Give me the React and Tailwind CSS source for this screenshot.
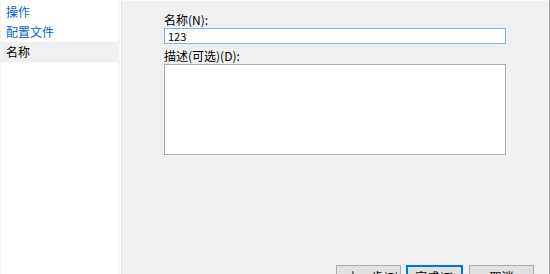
import React from "react";

const font = { fontFamily: '"Noto Sans CJK SC", "Microsoft YaHei", sans-serif' };

export default function App() {
  return (
    <div
      className="w-[550px] h-[274px] overflow-hidden flex bg-white text-[12px] text-black"
      style={font}
    >
      {/* left navigation */}
      <aside className="w-[118px] h-full bg-white flex flex-col pt-[2px] border-l border-[#f4f4f4]">
        <div className="h-[20px] leading-[20px] pl-[5px] text-[#0066cc]">操作</div>
        <div className="h-[20px] leading-[20px] pl-[5px] text-[#0066cc]">配置文件</div>
        <div className="h-[20px] leading-[20px] pl-[5px] bg-[#f0f0f0] text-black">名称</div>
      </aside>
      {/* splitter strip */}
      <div className="w-[3px] h-full bg-[#f9f9f9] border-l border-[#f0f0f0]" />
      {/* main panel */}
      <main className="flex-1 h-full bg-[#f0f0f0] border-l border-[#e6e6e6] border-r border-r-[#a0a0a0] flex flex-col">
        <div className="h-[2px] border-b border-[#fafafa]" />
        <div className="pl-[42px] pt-[11px] flex flex-col">
          <div className="h-[16px] leading-[16px]">名称(N):</div>
          <div className="w-[342px] h-[16px] border border-[#7eb4ea] bg-white leading-[14px] pl-[3px] text-[11px]">
            123
          </div>
          <div className="h-[16px] leading-[16px] mt-[4px]">描述(可选)(D):</div>
          <div className="w-[342px] h-[91px] border border-[#adadad] bg-white" />
        </div>
        <div className="flex justify-end pr-[15px] mt-[110px]">
          <button
            className="w-[65px] h-[23px] bg-[#e1e1e1] border border-[#adadad] leading-[20px] text-[12px]"
            style={font}
          >
            &lt; 上一步(B)
          </button>
          <button
            className="w-[57px] h-[23px] ml-[5px] bg-[#e1e1e1] border-2 border-[#0078d7] leading-[18px] text-[12px]"
            style={font}
          >
            完成(F)
          </button>
          <button
            className="w-[65px] h-[23px] ml-[6px] bg-[#e1e1e1] border border-[#adadad] leading-[20px] text-[12px]"
            style={font}
          >
            取消
          </button>
        </div>
      </main>
    </div>
  );
}
